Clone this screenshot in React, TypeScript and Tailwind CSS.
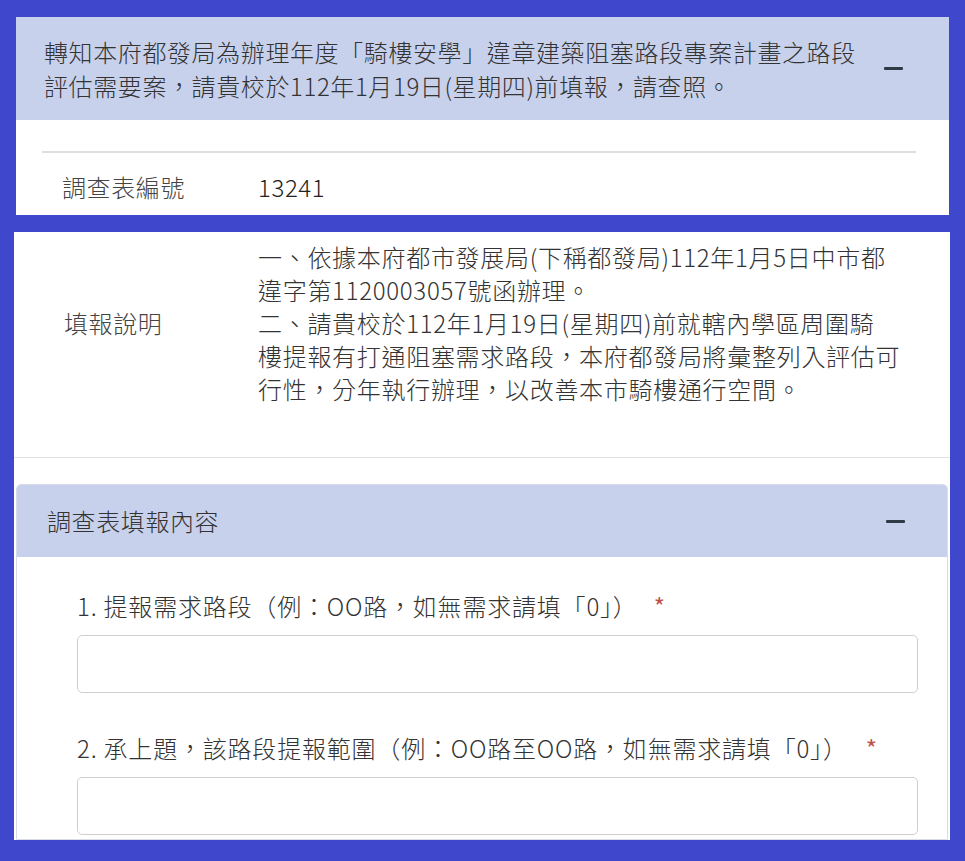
import React from "react";

function Minus() {
  return <div className="w-[19px] h-[3px] rounded-[1px] bg-[#2f3a45]" />;
}

export default function App() {
  return (
    <div className="h-[861px] w-[965px] bg-[#3f48cc] pt-[17px] font-['Noto_Sans_CJK_TC',sans-serif] font-light text-[#333]">
      {/* Card 1 */}
      <div className="ml-[16px] w-[933px] bg-white">
        <div className="flex h-[103px] items-center justify-between bg-[#c8d1ec] pl-[28px] pr-[46px]">
          <div className="text-[24px] leading-[34px] tracking-[0.6px] text-[#333]">
            <div className="whitespace-nowrap">轉知本府都發局為辦理年度「騎樓安學」違章建築阻塞路段專案計畫之路段</div>
            <div className="whitespace-nowrap">評估需要案，請貴校於112年1月19日(星期四)前填報，請查照。</div>
          </div>
          <Minus />
        </div>
        <div className="pl-[26px] pr-[33px] pt-[31px]">
          <div className="border-t-2 border-[#dedede]" />
          <div className="flex h-[62px] items-center pt-[6px] text-[24px] tracking-[0.6px]">
            <div className="w-[216px] pl-[20px] text-[#444]">調查表編號</div>
            <div className="text-[#222]">13241</div>
          </div>
        </div>
      </div>

      {/* Card 2 */}
      <div className="ml-[14px] mt-[17px] w-[936px] bg-white">
        <div className="flex h-[226px] items-center border-b border-[#e3e3e3] pb-[44px]">
          <div className="w-[244px] pl-[50px] text-[24px] tracking-[0.6px] text-[#444]">填報說明</div>
          <div className="text-[24px] leading-[33px] tracking-[0.7px] text-[#333]">
            <div className="whitespace-nowrap">一、依據本府都市發展局(下稱都發局)112年1月5日中市都</div>
            <div className="whitespace-nowrap">違字第1120003057號函辦理。</div>
            <div className="whitespace-nowrap">二、請貴校於112年1月19日(星期四)前就轄內學區周圍騎</div>
            <div className="whitespace-nowrap">樓提報有打通阻塞需求路段，本府都發局將彙整列入評估可</div>
            <div className="whitespace-nowrap">行性，分年執行辦理，以改善本市騎樓通行空間。</div>
          </div>
        </div>

        <div className="pt-[26px]">
          <div className="mx-[2px] overflow-hidden rounded-t-[5px] border border-[#d8dcea] bg-white">
            <div className="flex h-[72px] items-center justify-between bg-[#c8d1ec] pl-[30px] pr-[42px]">
              <div className="text-[24px] tracking-[0.6px] text-[#333]">調查表填報內容</div>
              <Minus />
            </div>
            <div className="pl-[60px] pr-[29px] pt-[32px] pb-[4px]">
              <div className="text-[24px] leading-[34px] tracking-[0.8px] text-[#333]">
                1. 提報需求路段（例：OO路，如無需求請填「0」）<span className="ml-[16px] font-normal text-[#c0504d]">*</span>
              </div>
              <div className="mt-[12px] h-[58px] rounded-[5px] border border-[#cfcfcf] bg-white" />
              <div className="mt-[38px] text-[24px] leading-[34px] tracking-[0.8px] text-[#333]">
                2. 承上題，該路段提報範圍（例：OO路至OO路，如無需求請填「0」）<span className="ml-[18px] font-normal text-[#c0504d]">*</span>
              </div>
              <div className="mt-[12px] h-[58px] rounded-[5px] border border-[#cfcfcf] bg-white" />
            </div>
          </div>
        </div>
      </div>
    </div>
  );
}
